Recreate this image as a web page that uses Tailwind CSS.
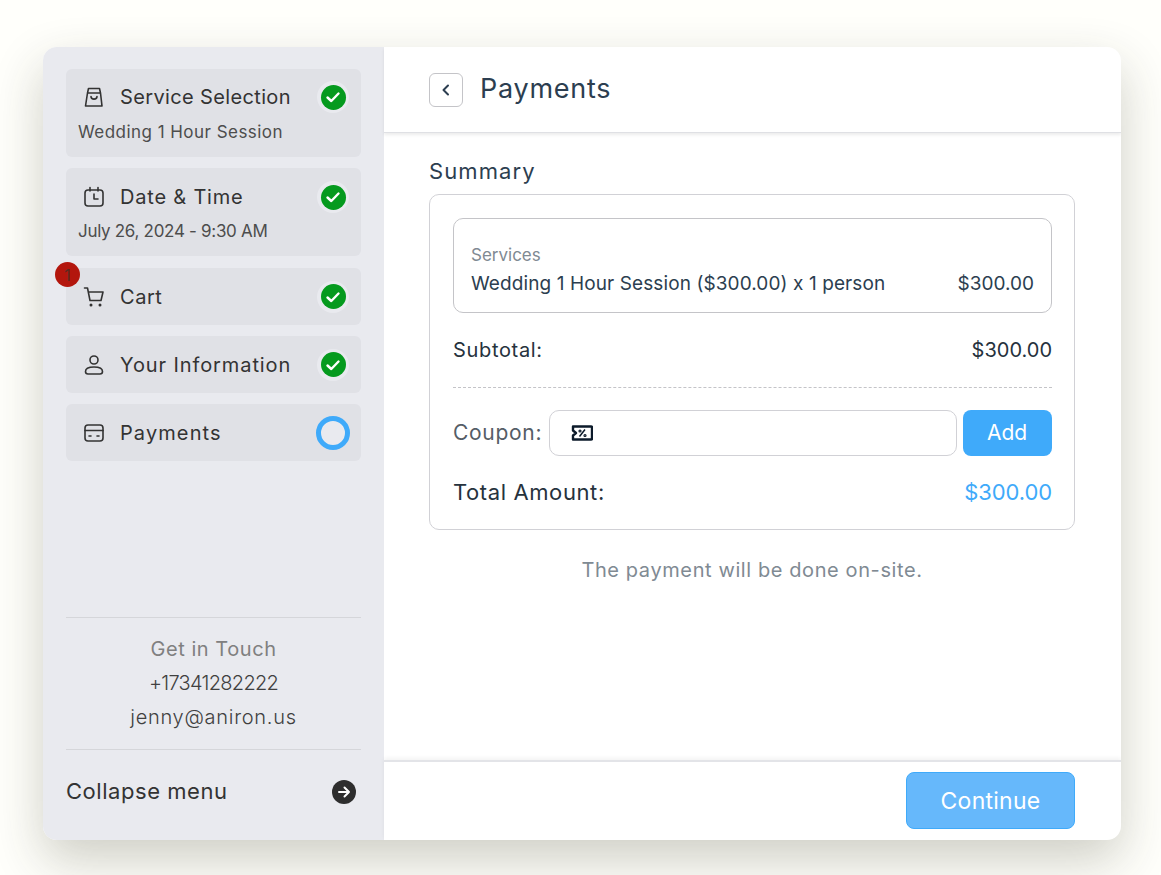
<!DOCTYPE html>
<html lang="en">
    <head>
        <meta charset="UTF-8" />
        <meta name="viewport" content="width=device-width, initial-scale=1.0" />
        <title>Payments</title>
        <script src="https://cdn.jsdelivr.net/npm/@tailwindcss/browser@4"></script>
    </head>
    <body class="bg-[#fffffb] h-[875px] overflow-hidden font-['Inter',sans-serif]">
        <div class="pt-[47px] pl-[43px]">
            <div class="w-[1078px] h-[793px] flex rounded-[14px] bg-white shadow-[0_20px_50px_rgba(50,50,30,0.24)] overflow-hidden">
                <!-- sidebar -->
                <aside class="w-[341px] bg-[#e9eaef] px-[23px] pt-[22px] flex flex-col">
                    <div class="flex flex-col gap-[11px]">
                        <div class="h-[88px] bg-[#e0e1e6] rounded-md px-3 pt-[13px]">
                            <div class="flex items-center h-[30px]">
                                <svg class="w-[22px] h-[22px] ml-[5px] mr-[15px] text-[#333]" viewBox="0 0 22 22" fill="none" stroke="currentColor" stroke-width="1.6" stroke-linecap="round" stroke-linejoin="round"><path d="M4.500 7 5.500 2.500h11L17.500 7M4.500 7h13l1.500 13H2.500z"/><path d="M8 10.500c0 3.500 6 3.500 6 0"/></svg>
                                <span class="text-[20px] text-[#333] tracking-[0.36px]">Service Selection</span>
                                <span class="ml-auto w-[32px] h-[32px] rounded-full bg-[#e9eaef] flex items-center justify-center">
                                    <span class="w-[25px] h-[25px] rounded-full bg-[#059a1e] flex items-center justify-center"><svg class="w-[16px] h-[16px]" viewBox="0 0 16 16" fill="none" stroke="white" stroke-width="2.4" stroke-linecap="round" stroke-linejoin="round"><path d="M2.500 8.500 6.300 12 13.500 4.500"/></svg></span>
                                </span>
                            </div>
                            <p class="text-[17px] text-[#4d4d4d] mt-[8px] tracking-[0.46px]">Wedding 1 Hour Session</p>
                        </div>
                        <div class="h-[88px] mb-px bg-[#e0e1e6] rounded-md px-3 pt-[14px]">
                            <div class="flex items-center h-[30px]">
                                <svg class="w-[22px] h-[22px] ml-[5px] mr-[15px] text-[#333]" viewBox="0 0 22 22" fill="none" stroke="currentColor" stroke-width="1.6" stroke-linecap="round" stroke-linejoin="round"><rect x="2" y="4" width="18" height="16" rx="3"/><path d="M7 1.500V5M15 1.500V5M11 8v5h4"/></svg>
                                <span class="text-[20px] text-[#333] tracking-[0.8px]">Date &amp; Time</span>
                                <span class="ml-auto w-[32px] h-[32px] rounded-full bg-[#e9eaef] flex items-center justify-center">
                                    <span class="w-[25px] h-[25px] rounded-full bg-[#059a1e] flex items-center justify-center"><svg class="w-[16px] h-[16px]" viewBox="0 0 16 16" fill="none" stroke="white" stroke-width="2.4" stroke-linecap="round" stroke-linejoin="round"><path d="M2.500 8.500 6.300 12 13.500 4.500"/></svg></span>
                                </span>
                            </div>
                            <p class="text-[17px] text-[#4d4d4d] mt-[7px] tracking-[-0.3px]">July 26, 2024 - 9:30 AM</p>
                        </div>
                        <div class="relative h-[57px] bg-[#e0e1e6] rounded-md px-3 flex items-center">
                            <span class="absolute -left-[11px] -top-[6px] w-[25px] h-[25px] rounded-full bg-[#b3160d] text-[#5a2a20] text-[16px] flex items-center justify-center">1</span>
                            <svg class="w-[22px] h-[22px] ml-[5px] mr-[15px] text-[#333]" viewBox="0 0 22 22" fill="none" stroke="currentColor" stroke-width="1.6" stroke-linecap="round" stroke-linejoin="round"><path d="M1.500 2h3l2.500 12.500h11L20 6H5.500"/><circle cx="8" cy="19" r=".7"/><circle cx="17" cy="19" r=".7"/></svg>
                            <span class="text-[20px] text-[#333] tracking-[0.55px]">Cart</span>
                            <span class="ml-auto w-[32px] h-[32px] rounded-full bg-[#e9eaef] flex items-center justify-center">
                                <span class="w-[25px] h-[25px] rounded-full bg-[#059a1e] flex items-center justify-center"><svg class="w-[16px] h-[16px]" viewBox="0 0 16 16" fill="none" stroke="white" stroke-width="2.4" stroke-linecap="round" stroke-linejoin="round"><path d="M2.500 8.500 6.300 12 13.500 4.500"/></svg></span>
                            </span>
                        </div>
                        <div class="h-[57px] bg-[#e0e1e6] rounded-md px-3 flex items-center">
                            <svg class="w-[22px] h-[22px] ml-[5px] mr-[15px] text-[#333]" viewBox="0 0 22 22" fill="none" stroke="currentColor" stroke-width="1.6" stroke-linecap="round" stroke-linejoin="round"><circle cx="11" cy="6" r="4"/><path d="M2.500 17.500c0-3 3.500-4.500 8.500-4.500s8.500 1.500 8.500 4.500c0 1.500-1 2.500-2.500 2.500H5c-1.500 0-2.500-1-2.500-2.500z"/></svg>
                            <span class="text-[20px] text-[#333] tracking-[0.9px]">Your Information</span>
                            <span class="ml-auto w-[32px] h-[32px] rounded-full bg-[#e9eaef] flex items-center justify-center">
                                <span class="w-[25px] h-[25px] rounded-full bg-[#059a1e] flex items-center justify-center"><svg class="w-[16px] h-[16px]" viewBox="0 0 16 16" fill="none" stroke="white" stroke-width="2.4" stroke-linecap="round" stroke-linejoin="round"><path d="M2.500 8.500 6.300 12 13.500 4.500"/></svg></span>
                            </span>
                        </div>
                        <div class="h-[57px] bg-[#e0e1e6] rounded-md px-3 flex items-center">
                            <svg class="w-[22px] h-[22px] ml-[5px] mr-[15px] text-[#333]" viewBox="0 0 22 22" fill="none" stroke="currentColor" stroke-width="1.6" stroke-linecap="round" stroke-linejoin="round"><rect x="2" y="3" width="18" height="16" rx="3"/><path d="M2 8.500h18M6 14h2M14 14h2"/></svg>
                            <span class="text-[20px] text-[#333] tracking-[1.1px]">Payments</span>
                            <span class="ml-auto w-[34px] h-[34px] rounded-full border-[5px] border-[#3faafa] bg-[#e9eaef] mr-[-1px]"></span>
                        </div>
                    </div>
                    <div class="mt-auto border-t border-[#d5d6da] h-[132px] flex flex-col items-center pt-[14px] text-[20px]">
                        <p class="h-[34px] leading-[34px] text-[#808080] tracking-[0.55px]">Get in Touch</p>
                        <p class="h-[34px] leading-[34px] text-[#404040] font-light tracking-[-0.7px]">+17341282222</p>
                        <p class="h-[34px] leading-[34px] text-[#404040] font-light tracking-[0.72px]">jenny@aniron.us</p>
                    </div>
                    <div class="border-t border-[#d5d6da] h-[91px] flex items-center pb-[7px]">
                        <span class="text-[22px] text-[#333] tracking-[0.54px]">Collapse menu</span>
                        <span class="ml-auto mr-[5px] w-[24px] h-[24px] rounded-full bg-[#2e2e2e] flex items-center justify-center"><svg class="w-[14px] h-[14px]" viewBox="0 0 14 14" fill="none" stroke="white" stroke-width="2" stroke-linecap="round" stroke-linejoin="round"><path d="M2 7h10M7.500 2.500 12 7l-4.500 4.500"/></svg></span>
                    </div>
                </aside>
                <!-- main -->
                <main class="flex-1 flex flex-col min-w-0">
                    <header class="h-[86px] px-[45px] flex items-center gap-[17px] border-b border-[#dfe0e4] shadow-[0_2px_3px_rgba(0,0,0,0.08)] shrink-0">
                        <button class="w-[34px] h-[34px] border border-[#c4c4c8] rounded-md flex items-center justify-center"><svg class="w-[14px] h-[14px] text-[#2c3e50]" viewBox="0 0 14 14" fill="none" stroke="currentColor" stroke-width="2" stroke-linecap="round" stroke-linejoin="round"><path d="M9 2.500 4.500 7 9 11.500"/></svg></button>
                        <h1 class="text-[27px] text-[#2c3e50] tracking-[0.75px]">Payments</h1>
                    </header>
                    <div class="flex-1 pl-[45px] pr-[46px] pt-[24px]">
                        <h2 class="text-[22px] leading-[28px] text-[#2c3e50] tracking-[1.1px]">Summary</h2>
                        <div class="mt-[9px] h-[336px] border border-[#d1d1d6] rounded-[10px] pl-[23px] pr-[22px] pt-[23px]">
                            <div class="h-[95px] border border-[#c4c4c8] rounded-[10px] px-[17px] pt-[25px]">
                                <p class="text-[17px] leading-[22px] text-[#808a93]">Services</p>
                                <div class="flex justify-between text-[19px] leading-[28px] text-[#2c3e50] mt-[4px]">
                                    <span class="tracking-[0.1px]">Wedding 1 Hour Session ($300.00) x 1 person</span>
                                    <span>$300.00</span>
                                </div>
                            </div>
                            <div class="flex justify-between h-[75px] items-center border-b border-dashed border-[#c4c4c8] text-[20px] text-[#26323d]">
                                <span class="tracking-[0.67px]">Subtotal:</span>
                                <span>$300.00</span>
                            </div>
                            <div class="flex items-center mt-[22px]">
                                <span class="text-[21px] text-[#555d66] w-[96px] tracking-[0.7px]">Coupon:</span>
                                <div class="w-[408px] h-[46px] border border-[#d1d1d6] rounded-[10px] flex items-center pl-[21px]">
                                    <svg class="w-[22px] h-[16px] text-[#0c1a2a]" viewBox="0 0 22 16" fill="none" stroke="currentColor" stroke-width="2.400" stroke-linejoin="round"><path d="M2 1.500h18a1 1 0 0 1 1 1v11a1 1 0 0 1-1 1H2v-4l3-2.500-3-2.500z"/><path d="M8.500 11.500 14 4.500" stroke-width="1.500"/><circle cx="9" cy="6" r="1" stroke-width="1.200"/><circle cx="14" cy="10.500" r="1" stroke-width="1.200"/></svg>
                                </div>
                                <button class="ml-[6px] w-[89px] h-[46px] rounded-lg bg-[#3faafa] text-white text-[21px] pr-px">Add</button>
                            </div>
                            <div class="flex justify-between items-center mt-[18px] h-[36px] text-[22px]">
                                <span class="text-[#26323d] tracking-[0.6px]">Total Amount:</span>
                                <span class="text-[#3faafa] tracking-[-0.1px]">$300.00</span>
                            </div>
                        </div>
                        <p class="text-center text-[20px] text-[#808a93] mt-[25px] tracking-[0.6px]">The payment will be done on-site.</p>
                    </div>
                    <footer class="h-[80px] pl-[46px] pr-[46px] flex items-center justify-end pb-[2px] border-t-2 border-[#e3e4e8] shadow-[0_-2px_4px_rgba(0,0,0,0.05)] shrink-0">
                        <button class="w-[169px] h-[57px] pt-[2px] bg-[#66b8fb] border border-[#3faafa] rounded-lg text-white text-[23px] tracking-[0.25px]">Continue</button>
                    </footer>
                </main>
            </div>
        </div>
    </body>
</html>
